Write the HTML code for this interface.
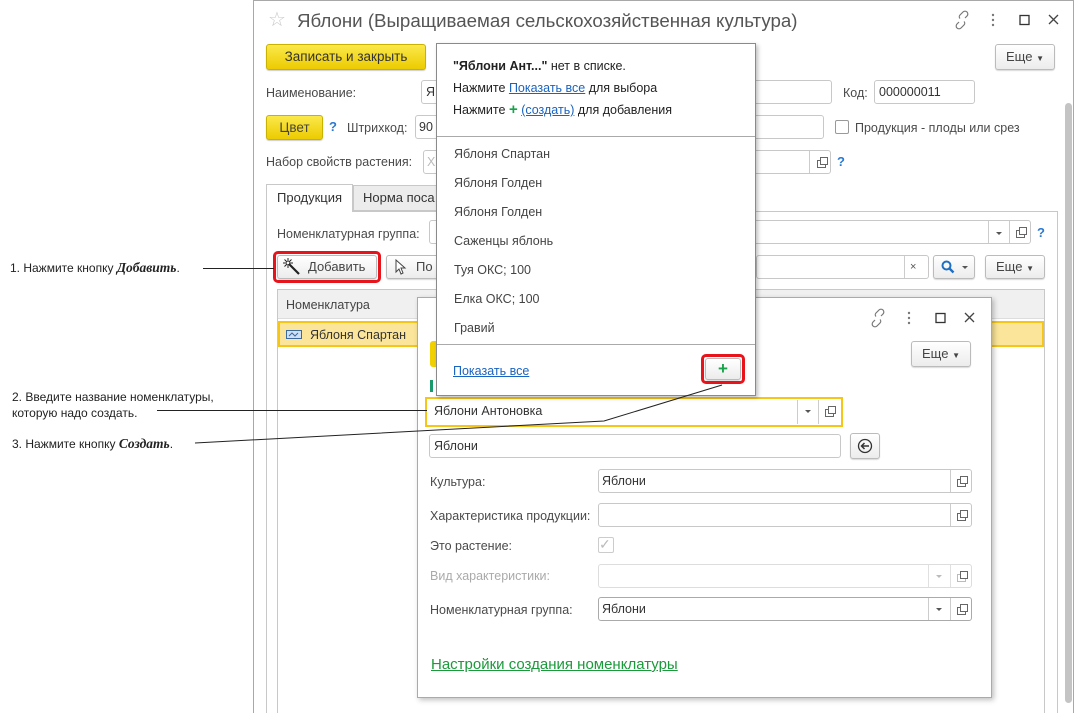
<!DOCTYPE html>
<html><head><meta charset="utf-8"><style>
*{box-sizing:border-box;margin:0;padding:0}
body{width:1076px;height:713px;background:#fff;position:relative;overflow:hidden;font-family:"Liberation Sans",sans-serif;font-size:12.5px;color:#4a4a4a}
.a{position:absolute}
.t{position:absolute;white-space:nowrap;line-height:16px}
.inp{position:absolute;border:1px solid #c8c8c8;border-radius:3px;background:#fff;height:24px}
.btn{position:absolute;border:1px solid #bbb;border-radius:3px;background:linear-gradient(#fff,#ececec);box-shadow:0 1px 1px rgba(0,0,0,.15);text-align:center;line-height:22px;color:#444;font-size:13px}
.ybtn{position:absolute;border:1px solid #c9b200;border-radius:3px;background:linear-gradient(#fbe94a,#eccb00);box-shadow:0 1px 1px rgba(0,0,0,.2);text-align:center;color:#333;font-size:13.5px}
.sep{position:absolute;width:1px;background:#ccc}
.q{position:absolute;color:#2a7ad0;font-size:13px;font-weight:bold}
.op{position:absolute;width:9px;height:8px;border:1px solid #666}
.op:after{content:"";position:absolute;left:2px;top:-4px;width:6px;height:6px;border:1px solid #666;background:#fff}
.dd{position:absolute;width:0;height:0;border-left:3px solid transparent;border-right:3px solid transparent;border-top:3px solid #555}
.li{position:absolute;left:17px;font-size:12.5px;color:#444}
</style></head><body>

<div class="t" style="left:10px;top:260px;color:#222;font-size:12px">1. Нажмите кнопку <b><i style="font-family:'Liberation Serif',serif;font-size:13.5px">Добавить</i></b>.</div>
<div class="t" style="left:12px;top:389px;color:#222;font-size:12px">2. Введите название номенклатуры,</div>
<div class="t" style="left:12px;top:405px;color:#222;font-size:12px">которую надо создать.</div>
<div class="t" style="left:12px;top:436px;color:#222;font-size:12px">3. Нажмите кнопку <b><i style="font-family:'Liberation Serif',serif;font-size:13.5px">Создать</i></b>.</div>

<div class="a" style="left:253px;top:0;width:821px;height:713px;border:1px solid #a8a8a8;border-bottom:none;background:#fff"></div>
<div class="t" style="left:268px;top:9px;font-size:20px;color:#c8c8c8;line-height:22px">☆</div>
<div class="t" style="left:297px;top:10px;font-size:18.7px;color:#555;line-height:22px">Яблони (Выращиваемая сельскохозяйственная культура)</div>
<svg class="a" style="left:952px;top:10px" width="110" height="20">
<g fill="none" stroke="#777" stroke-width="1.2"><path d="M7 12l-2 2a2.5 2.5 0 0 0 4 4l3-3a2.5 2.5 0 0 0 0-3.5M13 8l2-2a2.5 2.5 0 0 0-4-4l-3 3a2.5 2.5 0 0 0 0 3.5"/></g>
<g fill="#777"><circle cx="41" cy="5" r="1.2"/><circle cx="41" cy="10" r="1.2"/><circle cx="41" cy="15" r="1.2"/></g>
<rect x="68" y="5.5" width="9" height="9" fill="none" stroke="#333" stroke-width="1.3"/>
<path d="M97 5l9 9M106 5l-9 9" stroke="#444" stroke-width="1.3"/>
</svg>
<div class="ybtn" style="left:266px;top:44px;width:160px;height:26px;line-height:24px">Записать и закрыть</div>
<div class="btn" style="left:995px;top:44px;width:60px;height:26px;line-height:24px">Еще <span style="font-size:8px">▼</span></div>

<div class="t" style="left:266px;top:85px">Наименование:</div>
<div class="inp" style="left:421px;top:80px;width:411px"><span class="t" style="left:4px;top:3px;color:#333">Я</span></div>
<div class="t" style="left:843px;top:85px">Код:</div>
<div class="inp" style="left:874px;top:80px;width:101px"><span class="t" style="left:4px;top:3px;color:#333">000000011</span></div>

<div class="ybtn" style="left:266px;top:115px;width:57px;height:25px;line-height:23px;color:#444">Цвет</div>
<div class="q" style="left:329px;top:119px">?</div>
<div class="t" style="left:347px;top:120px">Штрихкод:</div>
<div class="inp" style="left:415px;top:115px;width:409px"><span class="t" style="left:3px;top:3px;color:#333">90</span></div>
<div class="a" style="left:835px;top:120px;width:14px;height:14px;border:1px solid #999;border-radius:2px"></div>
<div class="t" style="left:855px;top:120px">Продукция - плоды или срез</div>

<div class="t" style="left:266px;top:154px">Набор свойств растения:</div>
<div class="inp" style="left:423px;top:150px;width:408px"><span class="t" style="left:3px;top:3px;color:#bbb">Х</span></div>
<div class="sep" style="left:809px;top:151px;height:22px"></div>
<div class="op" style="left:817px;top:160px"></div>
<div class="q" style="left:837px;top:154px">?</div>

<div class="a" style="left:266px;top:211px;width:792px;height:502px;border:1px solid #c8c8c8;border-bottom:none"></div>
<div class="a" style="left:353px;top:185px;width:100px;height:26px;background:#ececec;border:1px solid #c8c8c8"></div>
<div class="t" style="left:363px;top:190px;color:#333;font-size:13px">Норма поса</div>
<div class="a" style="left:266px;top:184px;width:87px;height:28px;background:#fff;border:1px solid #c8c8c8;border-bottom:none"></div>
<div class="t" style="left:277px;top:190px;color:#333;font-size:13px">Продукция</div>

<div class="t" style="left:277px;top:226px">Номенклатурная группа:</div>
<div class="inp" style="left:429px;top:220px;width:602px"></div>
<div class="sep" style="left:988px;top:221px;height:22px"></div>
<div class="dd" style="left:996px;top:232px"></div>
<div class="sep" style="left:1009px;top:221px;height:22px"></div>
<div class="op" style="left:1016px;top:230px"></div>
<div class="q" style="left:1037px;top:225px">?</div>

<div class="a" style="left:273px;top:251px;width:108px;height:32px;border:3px solid #e8141b;border-radius:5px"></div>
<div class="btn" style="left:277px;top:255px;width:100px;height:24px;text-align:left;padding-left:30px">Добавить</div>
<svg class="a" style="left:283px;top:258px" width="18" height="18"><path d="M6 6l10 10" stroke="#222" stroke-width="2.2"/><path d="M5 0v4M5 6v4M0 5h4M6 5h4M1.5 1.5l2.5 2.5M8.5 1.5L6 4M1.5 8.5L4 6" stroke="#222" stroke-width="1"/></svg>
<div class="btn" style="left:386px;top:255px;width:60px;height:24px;text-align:left;padding-left:29px">По</div>
<svg class="a" style="left:395px;top:259px" width="12" height="16"><path d="M1 1v12l3-3 2 5 2-1-2-5h4z" fill="#fff" stroke="#444"/></svg>
<div class="inp" style="left:756px;top:255px;width:173px"></div>
<div class="sep" style="left:904px;top:256px;height:22px"></div>
<div class="t" style="left:910px;top:259px;font-size:11px;color:#555">×</div>
<div class="btn" style="left:933px;top:255px;width:42px;height:24px"></div>
<svg class="a" style="left:941px;top:260px" width="30" height="14"><circle cx="5.5" cy="5.5" r="4" fill="none" stroke="#1f6fc0" stroke-width="2"/><path d="M8.5 8.5l4 4" stroke="#1f6fc0" stroke-width="2.4"/><path d="M21 6h6l-3 3z" fill="#555"/></svg>
<div class="btn" style="left:985px;top:255px;width:60px;height:24px">Еще <span style="font-size:8px">▼</span></div>

<div class="a" style="left:277px;top:289px;width:768px;height:424px;border:1px solid #c8c8c8;border-bottom:none"></div>
<div class="a" style="left:278px;top:290px;width:766px;height:29px;background:#f0f0f0;border-bottom:1px solid #ddd"></div>
<div class="t" style="left:286px;top:297px;color:#444">Номенклатура</div>
<div class="a" style="left:278px;top:321px;width:766px;height:26px;background:#fbe59a;border:2px solid #f5c518"></div>
<svg class="a" style="left:286px;top:330px" width="16" height="10"><rect x=".5" y=".5" width="15" height="8" fill="#cfe0f5" stroke="#3a6aa0"/><path d="M3 6l3-3 3 3 3-3" fill="none" stroke="#3a6aa0"/></svg>
<div class="t" style="left:310px;top:327px;color:#333">Яблоня Спартан</div>

<div class="a" style="left:1065px;top:103px;width:7px;height:600px;background:#c4c4c4;border-radius:4px"></div>

<div class="a" style="left:417px;top:297px;width:575px;height:401px;background:#fff;border:1px solid #aaa;box-shadow:2px 2px 5px rgba(0,0,0,.25)"></div>
<svg class="a" style="left:868px;top:308px" width="110" height="20">
<g fill="none" stroke="#777" stroke-width="1.2"><path d="M7 12l-2 2a2.5 2.5 0 0 0 4 4l3-3a2.5 2.5 0 0 0 0-3.5M13 8l2-2a2.5 2.5 0 0 0-4-4l-3 3a2.5 2.5 0 0 0 0 3.5"/></g>
<g fill="#777"><circle cx="41" cy="5" r="1.2"/><circle cx="41" cy="10" r="1.2"/><circle cx="41" cy="15" r="1.2"/></g>
<rect x="68" y="5.5" width="9" height="9" fill="none" stroke="#333" stroke-width="1.3"/>
<path d="M97 5l9 9M106 5l-9 9" stroke="#444" stroke-width="1.3"/>
</svg>
<div class="btn" style="left:911px;top:341px;width:60px;height:26px;line-height:24px">Еще <span style="font-size:8px">▼</span></div>
<div class="a" style="left:430px;top:341px;width:8px;height:26px;background:#f0d000;border-radius:3px 0 0 3px"></div>
<div class="a" style="left:430px;top:380px;width:3px;height:12px;background:#1a9a6a"></div>

<div class="a" style="left:425px;top:397px;width:418px;height:30px;border:2px solid #f5c518"></div>
<div class="t" style="left:434px;top:403px;color:#333">Яблони Антоновка</div>
<div class="sep" style="left:797px;top:400px;height:24px"></div>
<div class="dd" style="left:805px;top:410px"></div>
<div class="sep" style="left:818px;top:400px;height:24px"></div>
<div class="op" style="left:825px;top:409px"></div>

<div class="inp" style="left:429px;top:434px;width:412px"><span class="t" style="left:4px;top:3px;color:#333">Яблони</span></div>
<div class="btn" style="left:850px;top:433px;width:30px;height:26px"></div>
<svg class="a" style="left:856px;top:438px" width="18" height="16"><circle cx="9" cy="8" r="6.5" fill="none" stroke="#333" stroke-width="1.3"/><path d="M13 8H6M8.5 5L5.5 8l3 3" fill="none" stroke="#333" stroke-width="1.5"/></svg>

<div class="t" style="left:430px;top:474px">Культура:</div>
<div class="inp" style="left:598px;top:469px;width:374px"><span class="t" style="left:3px;top:3px;color:#333">Яблони</span></div>
<div class="sep" style="left:950px;top:470px;height:22px"></div><div class="op" style="left:957px;top:479px"></div>
<div class="t" style="left:430px;top:508px">Характеристика продукции:</div>
<div class="inp" style="left:598px;top:503px;width:374px"></div>
<div class="sep" style="left:950px;top:504px;height:22px"></div><div class="op" style="left:957px;top:513px"></div>
<div class="t" style="left:430px;top:538px">Это растение:</div>
<div class="a" style="left:598px;top:537px;width:16px;height:16px;border:1px solid #ccc;border-radius:2px"></div>
<div class="t" style="left:599px;top:536px;color:#bbb;font-size:14px">✓</div>
<div class="t" style="left:430px;top:568px;color:#aaa">Вид характеристики:</div>
<div class="inp" style="left:598px;top:564px;width:374px;border-color:#ddd"></div>
<div class="sep" style="left:928px;top:565px;height:22px;background:#e0e0e0"></div><div class="dd" style="left:936px;top:575px;border-top-color:#bbb"></div>
<div class="sep" style="left:950px;top:565px;height:22px;background:#e0e0e0"></div><div class="op" style="left:957px;top:574px;border-color:#bbb"></div>
<div class="t" style="left:430px;top:602px">Номенклатурная группа:</div>
<div class="inp" style="left:598px;top:597px;width:374px;border-color:#aaa"><span class="t" style="left:3px;top:3px;color:#333">Яблони</span></div>
<div class="sep" style="left:928px;top:598px;height:22px"></div><div class="dd" style="left:936px;top:608px"></div>
<div class="sep" style="left:950px;top:598px;height:22px"></div><div class="op" style="left:957px;top:607px"></div>
<div class="t" style="left:431px;top:656px;font-size:15px;color:#1a9a3a;text-decoration:underline;line-height:18px">Настройки создания номенклатуры</div>

<div class="a" style="left:436px;top:43px;width:320px;height:353px;background:#fff;border:1px solid #8a8a8a;box-shadow:2px 2px 4px rgba(0,0,0,.25)">
<div class="t" style="left:16px;top:14px;color:#222"><b>"Яблони Ант..."</b> нет в списке.</div>
<div class="t" style="left:16px;top:36px;color:#222">Нажмите <span style="color:#1a63c0;text-decoration:underline">Показать все</span> для выбора</div>
<div class="t" style="left:16px;top:58px;color:#222">Нажмите <b style="color:#17a34a;font-size:15px">+</b> <span style="color:#1a63c0;text-decoration:underline">(создать)</span> для добавления</div>
<div class="a" style="left:0;top:92px;width:318px;height:1px;background:#aaa"></div>
<div class="li t" style="top:102px">Яблоня Спартан</div>
<div class="li t" style="top:131px">Яблоня Голден</div>
<div class="li t" style="top:160px">Яблоня Голден</div>
<div class="li t" style="top:189px">Саженцы яблонь</div>
<div class="li t" style="top:218px">Туя ОКС; 100</div>
<div class="li t" style="top:247px">Елка ОКС; 100</div>
<div class="li t" style="top:276px">Гравий</div>
<div class="a" style="left:0;top:300px;width:318px;height:1px;background:#aaa"></div>
<div class="t" style="left:16px;top:319px;color:#1a63c0;text-decoration:underline">Показать все</div>
<div class="a" style="left:264px;top:310px;width:44px;height:30px;border:3px solid #e8141b;border-radius:5px"></div>
<div class="btn" style="left:268px;top:314px;width:36px;height:22px;line-height:20px;color:#17a34a;font-weight:bold;font-size:17px">+</div>
</div>

<svg class="a" style="left:0;top:0" width="1076" height="713">
<g fill="none" stroke="#222" stroke-width="1">
<path d="M203 268.5H274"/>
<path d="M157 410.5H427"/>
<path d="M195 443L604 421L722 385"/>
</g></svg>
</body></html>
